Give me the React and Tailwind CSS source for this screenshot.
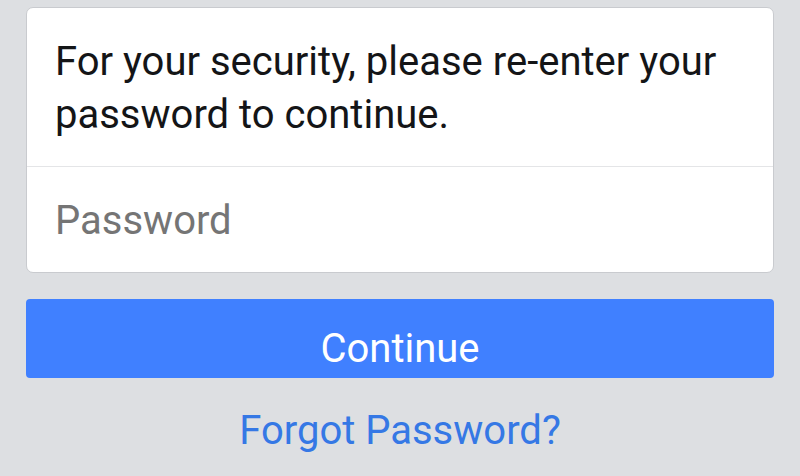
const App = () => {
  return (
    <div
      className="w-[800px] h-[476px] overflow-hidden bg-[#dddfe2] pt-[7px] px-[26px]"
      style={{ fontFamily: "Roboto, 'Liberation Sans', sans-serif" }}
    >
      <div className="bg-white rounded-[7px] border border-[#c9cbcf] overflow-hidden">
        <p className="h-[158px] pl-[28px] pt-[27px] text-[40px] leading-[53px] text-[#141517]">
          For your security, please re-enter your password to continue.
        </p>
        <div className="h-[106px] border-t border-[#e4e5e7] pl-[28px] pt-[27px] text-[40px] leading-[53px] text-[#757575]">
          Password
        </div>
      </div>

      <button
        type="button"
        className="mt-[26px] w-full h-[79px] rounded-[4px] bg-[#4080ff] text-white text-[40px] leading-[53px] flex items-start justify-center pt-[23px]"
      >
        Continue
      </button>

      <p className="mt-[26px] text-center text-[40px] leading-[53px] text-[#3578e5]">
        Forgot Password?
      </p>
    </div>
  );
};

export default App;
